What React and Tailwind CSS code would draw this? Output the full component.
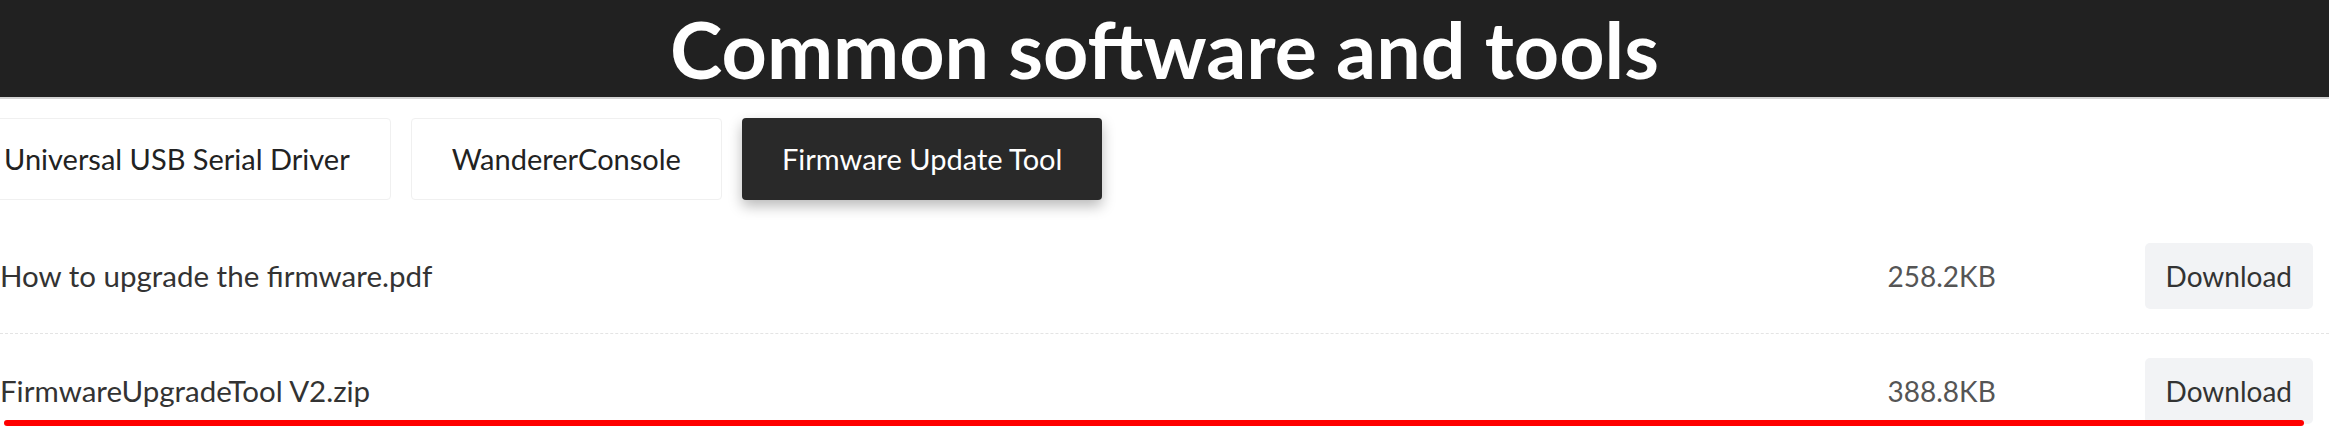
import React, { useState } from "react";

const tabs = ["Universal USB Serial Driver", "WandererConsole", "Firmware Update Tool"];

const files = {
  "Firmware Update Tool": [
    { name: "How to upgrade the firmware.pdf", size: "258.2KB" },
    { name: "FirmwareUpgradeTool V2.zip", size: "388.8KB" },
  ],
};

const App = () => {
  const [active, setActive] = useState("Firmware Update Tool");
  const list = files[active] || [];

  return (
    <div className="relative w-full h-[439px] overflow-hidden bg-white font-['Lato','Noto_Sans',sans-serif]">
      <div className="h-[99px] bg-[#212121] border-b-2 border-[#d4d4d4] flex items-center justify-center">
        <h1 className="text-white font-bold text-[79px] leading-none">Common software and tools</h1>
      </div>

      <div className="flex gap-[20px] ml-[-37px] mt-[19px]">
        {tabs.map((tab) => (
          <button
            key={tab}
            onClick={() => setActive(tab)}
            className={`h-[82px] px-[40px] flex items-center rounded-[4px] text-[29px] ${
              tab === active
                ? "bg-[#292929] text-white shadow-[0_6px_14px_rgba(0,0,0,0.28)]"
                : "bg-white text-[#222] border border-[#f0f0f0]"
            }`}
          >
            {tab}
          </button>
        ))}
      </div>

      <div className="mt-[19px]">
        {list.map((file, i) => (
          <div
            key={file.name}
            className={`flex items-center py-[24px] pr-[16px] ${i < list.length - 1 ? "border-b border-dashed border-[#e4e4e4]" : ""}`}
          >
            <span className="flex-1 text-[29.5px] text-[#333]">{file.name}</span>
            <span className="w-[257px] text-[28px] text-[#555]">{file.size}</span>
            <button className="h-[66px] px-[21px] bg-[#f2f3f5] rounded-[5px] text-[28px] text-[#333]">Download</button>
          </div>
        ))}
      </div>

      {/* red annotation stroke */}
      <div className="absolute left-[4px] top-[420px] w-[2300px] h-[6px] rounded-full bg-[#ff0000]" />
    </div>
  );
};

export default App;
